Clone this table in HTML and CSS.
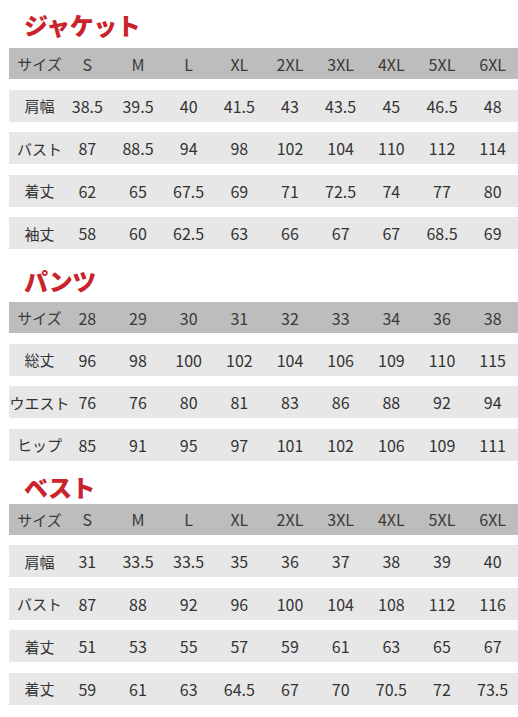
FILE: index.html
```html
<!DOCTYPE html>
<html lang="ja">
<head>
<meta charset="utf-8">
<title>サイズ表</title>
<link rel="stylesheet" href="styles.css">
</head>
<body>
<section class="sec sec-jacket">
  <h2 class="title">ジャケット</h2>
  <div class="table">
    <div class="row head"><span class="lbl">サイズ</span><span>S</span><span>M</span><span>L</span><span>XL</span><span>2XL</span><span>3XL</span><span>4XL</span><span>5XL</span><span>6XL</span></div>
    <div class="row"><span class="lbl">肩幅</span><span>38.5</span><span>39.5</span><span>40</span><span>41.5</span><span>43</span><span>43.5</span><span>45</span><span>46.5</span><span>48</span></div>
    <div class="row"><span class="lbl">バスト</span><span>87</span><span>88.5</span><span>94</span><span>98</span><span>102</span><span>104</span><span>110</span><span>112</span><span>114</span></div>
    <div class="row"><span class="lbl">着丈</span><span>62</span><span>65</span><span>67.5</span><span>69</span><span>71</span><span>72.5</span><span>74</span><span>77</span><span>80</span></div>
    <div class="row"><span class="lbl">袖丈</span><span>58</span><span>60</span><span>62.5</span><span>63</span><span>66</span><span>67</span><span>67</span><span>68.5</span><span>69</span></div>
  </div>
</section>
<section class="sec sec-pants">
  <h2 class="title">パンツ</h2>
  <div class="table">
    <div class="row head"><span class="lbl">サイズ</span><span>28</span><span>29</span><span>30</span><span>31</span><span>32</span><span>33</span><span>34</span><span>36</span><span>38</span></div>
    <div class="row"><span class="lbl">総丈</span><span>96</span><span>98</span><span>100</span><span>102</span><span>104</span><span>106</span><span>109</span><span>110</span><span>115</span></div>
    <div class="row"><span class="lbl">ウエスト</span><span>76</span><span>76</span><span>80</span><span>81</span><span>83</span><span>86</span><span>88</span><span>92</span><span>94</span></div>
    <div class="row"><span class="lbl">ヒップ</span><span>85</span><span>91</span><span>95</span><span>97</span><span>101</span><span>102</span><span>106</span><span>109</span><span>111</span></div>
  </div>
</section>
<section class="sec sec-vest">
  <h2 class="title">ベスト</h2>
  <div class="table">
    <div class="row head"><span class="lbl">サイズ</span><span>S</span><span>M</span><span>L</span><span>XL</span><span>2XL</span><span>3XL</span><span>4XL</span><span>5XL</span><span>6XL</span></div>
    <div class="row"><span class="lbl">肩幅</span><span>31</span><span>33.5</span><span>33.5</span><span>35</span><span>36</span><span>37</span><span>38</span><span>39</span><span>40</span></div>
    <div class="row"><span class="lbl">バスト</span><span>87</span><span>88</span><span>92</span><span>96</span><span>100</span><span>104</span><span>108</span><span>112</span><span>116</span></div>
    <div class="row"><span class="lbl">着丈</span><span>51</span><span>53</span><span>55</span><span>57</span><span>59</span><span>61</span><span>63</span><span>65</span><span>67</span></div>
    <div class="row"><span class="lbl">着丈</span><span>59</span><span>61</span><span>63</span><span>64.5</span><span>67</span><span>70</span><span>70.5</span><span>72</span><span>73.5</span></div>
  </div>
</section>
</body>
</html>
```

FILE: styles.css
```css
* { box-sizing: border-box; }
html, body { margin: 0; padding: 0; background: #fff; }
body {
  font-family: "Noto Sans CJK JP", "Noto Sans", sans-serif;
  color: #333;
  overflow: hidden;
}
.title {
  margin: 0;
  height: 34px;
  line-height: 34px;
  padding-left: 24px;
  font-size: 24px;
  font-weight: 900;
  color: #c9232b;
  letter-spacing: -0.5px;
}
.sec-jacket { padding-top: 8px; }
.sec-jacket .title { margin-bottom: 6px; }
.sec-pants .title { margin-top: 15px; margin-bottom: 4px; }
.sec-vest .title { margin-top: 9px; margin-bottom: 0; }
.table {
  display: flex;
  flex-direction: column;
  gap: 10.5px;
  margin-left: 9px;
}
.row {
  display: grid;
  grid-template-columns: 53px repeat(9, 1fr);
  height: 32px;
  align-items: center;
  background: #e7e7e7;
  font-size: 16px;
}
.row.head {
  height: 31px;
  background: #bdbdbd;
  color: #3a3a3a;
}
.row span {
  display: flex;
  justify-content: center;
  white-space: nowrap;
}
.row .lbl {
  padding-left: 8px;
  font-size: 15px;
}
```
